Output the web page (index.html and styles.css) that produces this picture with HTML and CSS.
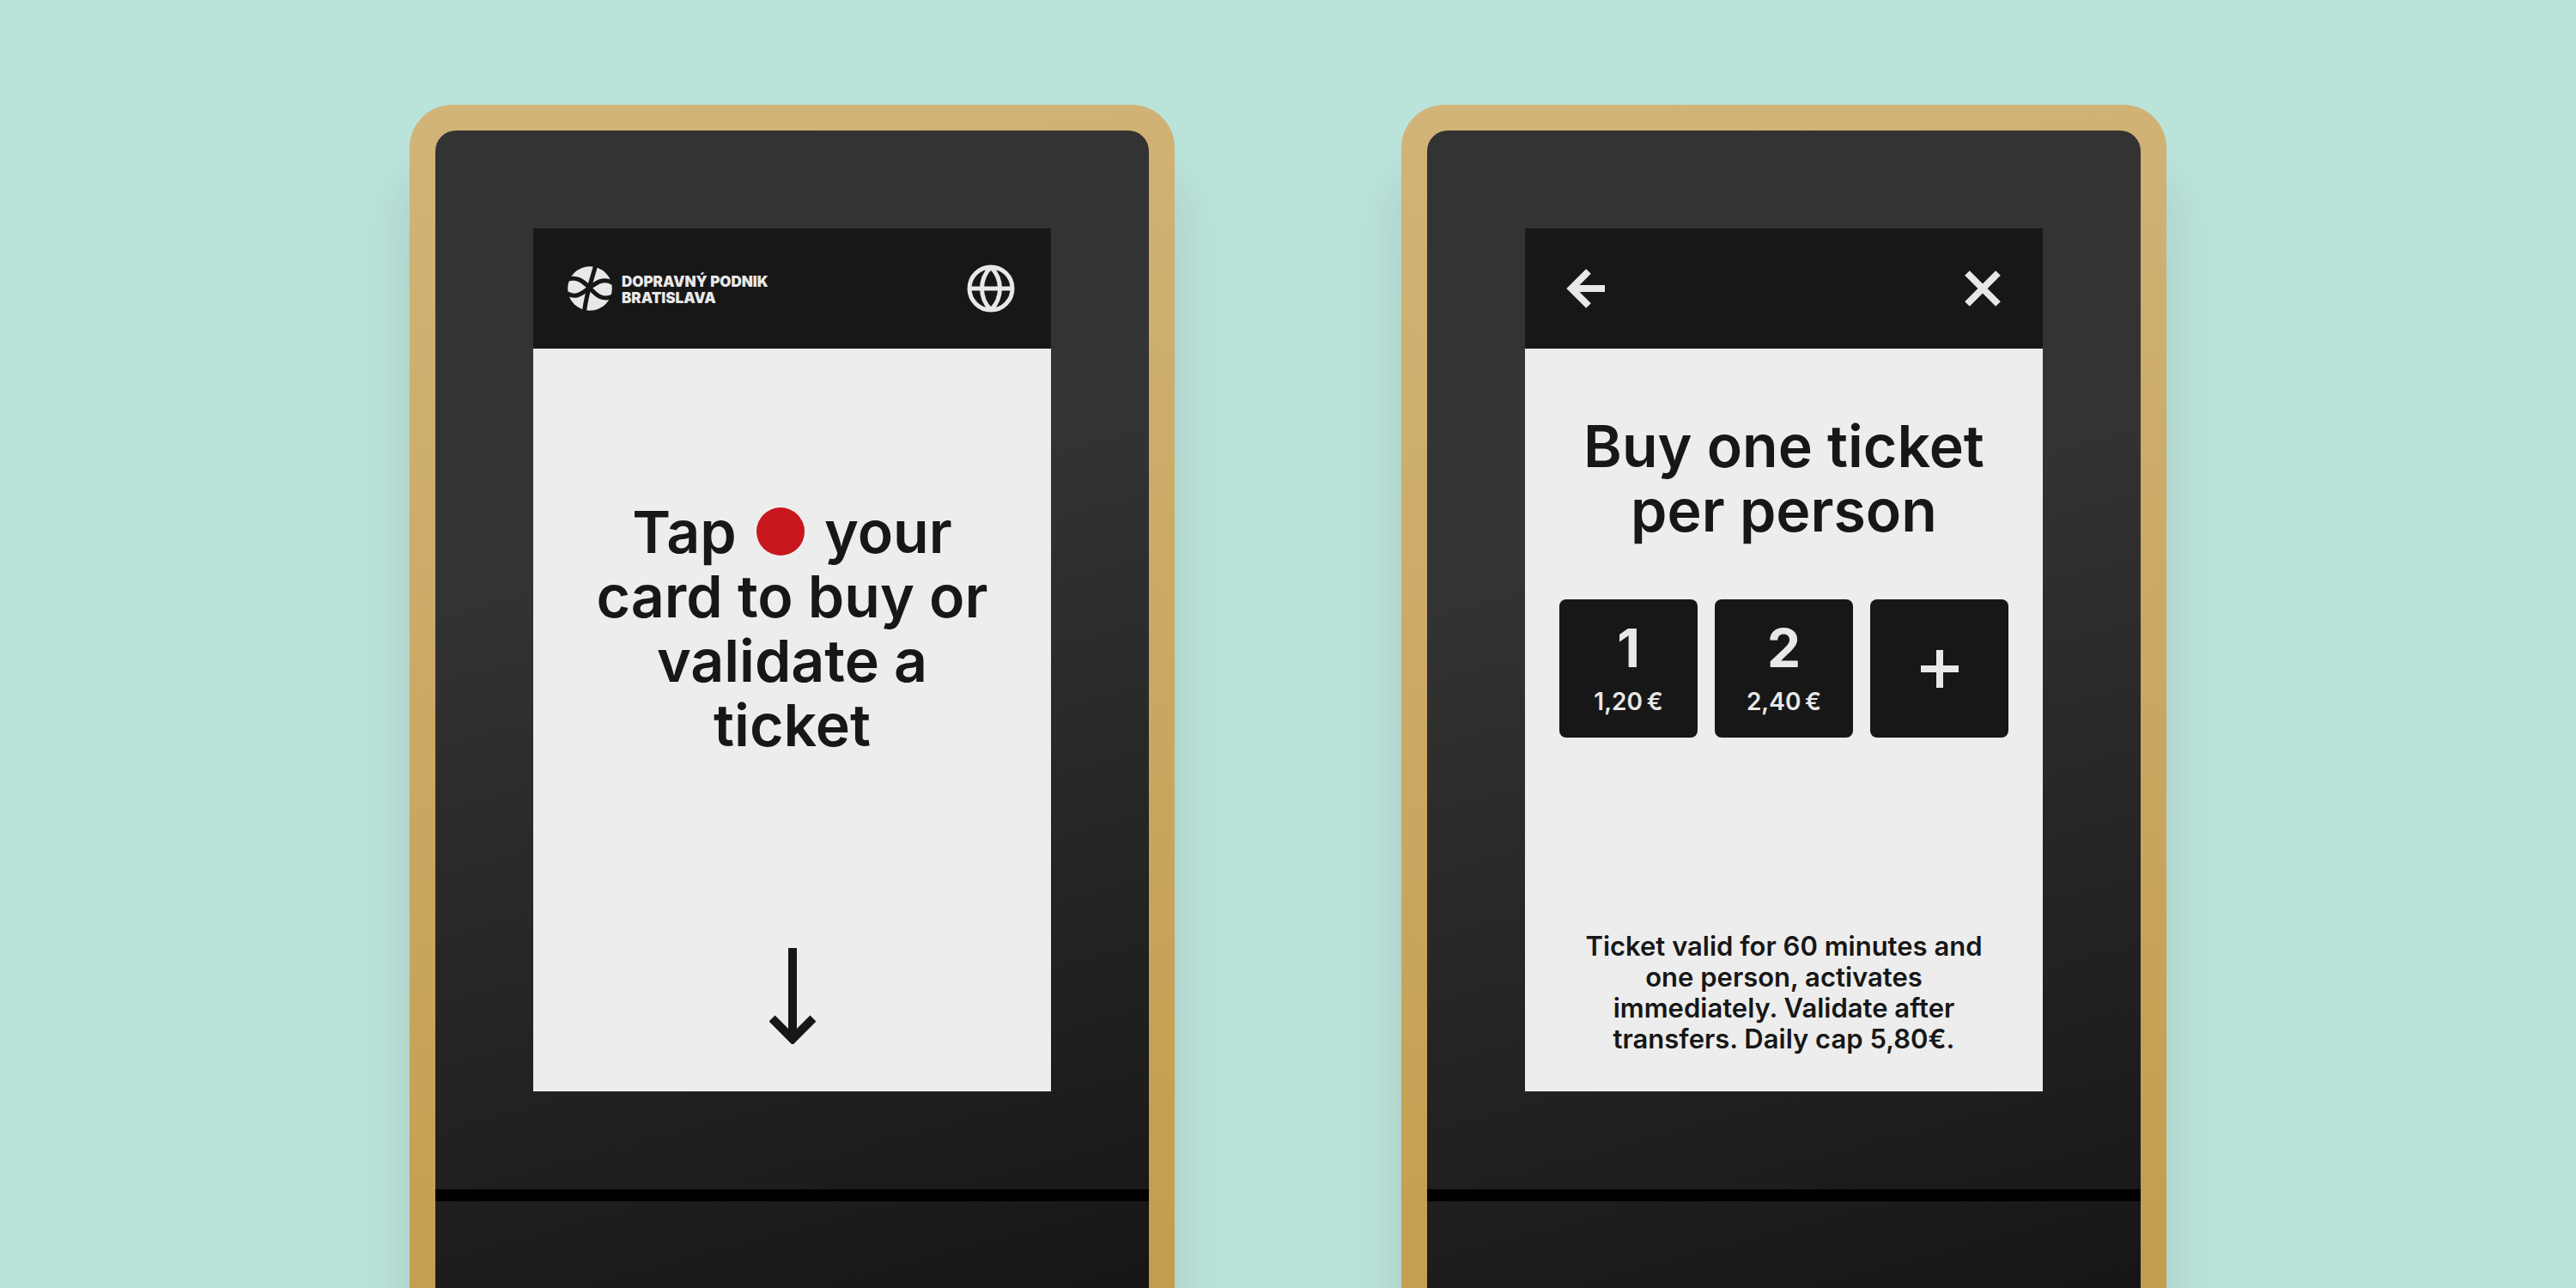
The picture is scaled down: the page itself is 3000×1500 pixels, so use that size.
FILE: index.html
```html
<!DOCTYPE html>
<html lang="en">
<head>
<meta charset="utf-8">
<title>Ticket validator</title>
<link rel="stylesheet" href="styles.css">
</head>
<body>
<main class="stage">
  <article class="kiosk">
    <div class="panel">
      <div class="bezel">
        <section class="screen">
          <header class="topbar">
            <a class="brand" href="#">
              <svg class="brand-mark" viewBox="34 32 154 154" aria-hidden="true">
                <circle cx="111" cy="109" r="76.500" fill="#e8e8e8"/>
                <g fill="none" stroke="#171717" stroke-width="15">
                  <path d="M32 78C64 66 86 82 108 105S152 153 190 136"/>
                  <path d="M32 126C64 146 88 122 110 106S156 70 190 90"/>
                  <path d="M131 28C120 74 100 116 91 192"/>
                </g>
              </svg>
              <span class="brand-name">DOPRAVNÝ PODNIK<br>BRATISLAVA</span>
            </a>
            <button class="icon-button" type="button" aria-label="Language">
              <svg viewBox="0 0 60 60" fill="none" stroke="currentColor" stroke-width="5">
                <circle cx="30" cy="30" r="25"/>
                <path d="M5 30h50M30 5C16 19 16 41 30 55M30 5c14 14 14 36 0 50"/>
              </svg>
            </button>
          </header>
          <div class="content content-tap">
            <h1 class="headline">Tap <span class="dot"></span> your<br>card to buy or<br>validate a<br>ticket</h1>
            <svg class="down-arrow" viewBox="0 0 54 112" aria-hidden="true">
              <path d="M27 0v104M3 82l24 24 24-24" fill="none" stroke="currentColor" stroke-width="10"/>
            </svg>
          </div>
        </section>
      </div>
      <div class="slot"></div>
    </div>
  </article>

  <article class="kiosk">
    <div class="panel">
      <div class="bezel">
        <section class="screen">
          <header class="topbar">
            <button class="icon-button" type="button" aria-label="Back">
              <svg viewBox="0 0 60 60" fill="none" stroke="currentColor" stroke-width="8">
                <path d="M53 30H14M34 10L14 30l20 20"/>
              </svg>
            </button>
            <button class="icon-button" type="button" aria-label="Close">
              <svg viewBox="0 0 60 60" fill="none" stroke="currentColor" stroke-width="8">
                <path d="M12 12l36 36M48 12L12 48"/>
              </svg>
            </button>
          </header>
          <div class="content content-buy">
            <h1 class="headline">Buy one ticket<br>per person</h1>
            <div class="tiles">
              <button class="tile" type="button"><span class="count">1</span><span class="price">1,20&#8201;€</span></button>
              <button class="tile" type="button"><span class="count">2</span><span class="price">2,40&#8201;€</span></button>
              <button class="tile" type="button" aria-label="More tickets">
                <svg class="plus" viewBox="0 0 44 44" aria-hidden="true">
                  <path d="M22 0v44M0 22h44" fill="none" stroke="currentColor" stroke-width="8"/>
                </svg>
              </button>
            </div>
            <p class="terms">Ticket valid for 60 minutes and<br>one person, activates<br>immediately. Validate after<br>transfers. Daily cap 5,80€.</p>
          </div>
        </section>
      </div>
      <div class="slot"></div>
    </div>
  </article>
</main>
</body>
</html>
```
FILE: styles.css
```css
* {
  box-sizing: border-box;
}

body {
  margin: 0;
  background: #bae3da;
  color: #171717;
  font-family: Inter, "Liberation Sans", sans-serif;
  font-weight: 600;
}

.stage {
  display: flex;
  justify-content: center;
  gap: 264px;
  min-height: 100vh;
  padding: 122px 40px 0;
  overflow: hidden;
}

.kiosk {
  display: flex;
  flex: 0 1 891px;
  padding: 30px 30px 0;
  border-radius: 50px 50px 0 0;
  background: linear-gradient(172deg, #d2b478, #c39d4e);
  box-shadow: 0 80px 64px rgba(60, 50, 50, 0.14);
}

.panel {
  flex: 1;
  border-radius: 24px 24px 0 0;
  background: linear-gradient(165deg, #333 35%, #161616);
}

.bezel {
  padding: 114px;
}

.slot {
  height: 14px;
  background: #000;
}

.screen {
  display: flex;
  flex-direction: column;
  aspect-ratio: 3 / 5;
  background: #ededed;
}

.topbar {
  display: flex;
  align-items: center;
  justify-content: space-between;
  height: 140px;
  padding: 0 40px;
  background: #171717;
  color: #e8e8e8;
}

.brand {
  display: flex;
  align-items: center;
  gap: 11px;
  color: inherit;
  text-decoration: none;
}

.brand-mark {
  width: 52px;
  height: 52px;
}

.brand-name {
  padding-top: 4px;
  font-size: 17px;
  font-weight: 900;
  line-height: 19px;
}

button {
  padding: 0;
  border: 0;
  background: none;
  color: inherit;
  font: inherit;
  cursor: pointer;
}

.icon-button,
.icon-button svg {
  display: block;
  width: 60px;
  height: 60px;
}

.content {
  display: flex;
  flex: 1;
  flex-direction: column;
  align-items: center;
  text-align: center;
}

.content-tap {
  padding-bottom: 55px;
}

.content-tap .headline {
  margin: auto;
}

.content-buy {
  padding: 76px 40px 43px;
}

.headline {
  margin: 0;
  font-size: 68px;
  font-weight: 600;
  line-height: 75px;
  white-space: nowrap;
}

.dot {
  display: inline-block;
  width: 56px;
  height: 56px;
  margin: 0 6px;
  border-radius: 50%;
  background: #c8171e;
  vertical-align: -3px;
}

.down-arrow {
  width: 54px;
  height: 112px;
  margin-top: 46px;
}

.tiles {
  display: grid;
  grid-template-columns: repeat(3, 1fr);
  gap: 20px;
  width: 100%;
  margin-top: 66px;
}

.tile {
  display: flex;
  flex-direction: column;
  align-items: center;
  justify-content: center;
  aspect-ratio: 1;
  border-radius: 8px;
  background: #171717;
  color: #e8e8e8;
}

.count {
  margin-bottom: 8px;
  font-size: 62px;
  font-weight: 700;
  line-height: 72px;
}

.price {
  margin-bottom: 4px;
  font-size: 28px;
  line-height: 36px;
}

.plus {
  width: 44px;
  height: 44px;
}

.terms {
  margin: auto 0 0;
  font-size: 31px;
  line-height: 36px;
}
```
